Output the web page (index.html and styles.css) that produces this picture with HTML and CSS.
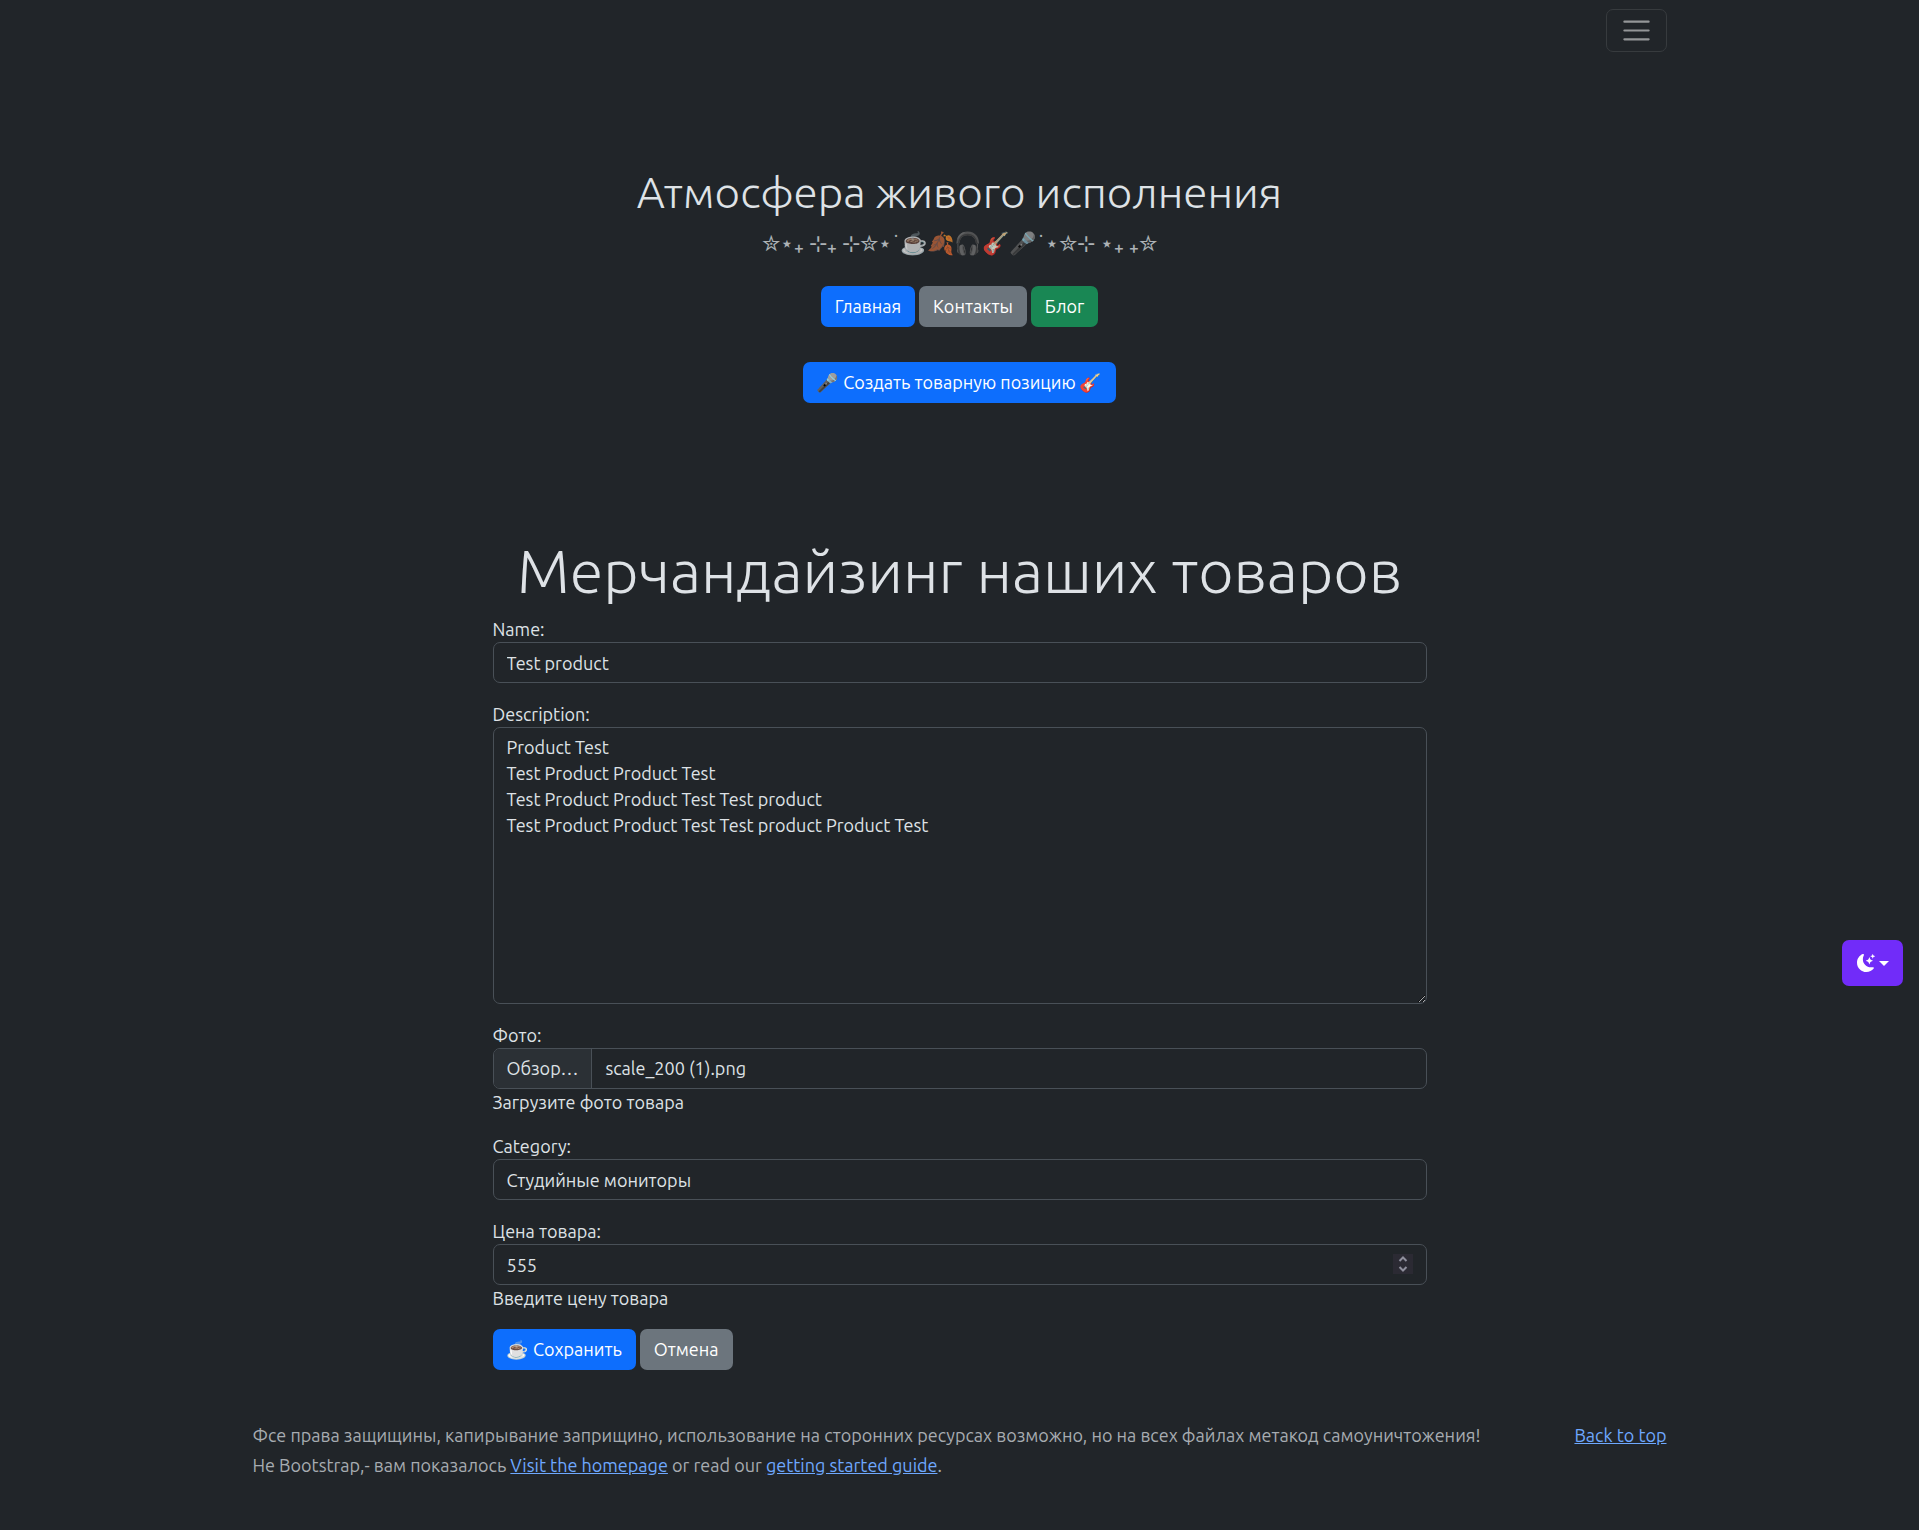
FILE: index.html
```html
<!DOCTYPE html>
<html lang="ru">
<head>
<meta charset="utf-8">
<meta name="viewport" content="width=device-width, initial-scale=1">
<title>Мерчандайзинг наших товаров</title>
<link rel="stylesheet" href="styles.css">
</head>
<body>
<header class="navbar">
  <div class="container navbar-row">
    <button class="toggler" type="button" aria-label="Меню">
      <svg class="toggler-icon" viewBox="0 0 30 30" aria-hidden="true"><path d="M4 7h22M4 15h22M4 23h22" fill="none" stroke="currentColor" stroke-width="2" stroke-linecap="round" stroke-miterlimit="10"/></svg>
    </button>
  </div>
</header>

<main>
  <section class="hero">
    <h1 class="hero-title">Атмосфера живого исполнения</h1>
    <p class="lead">✮⋆<span class="plus">₊</span> ⊹<span class="plus">₊</span> ⊹✮⋆˙☕🍂🎧🎸🎤˙⋆✮⊹ ⋆<span class="plus">₊</span> <span class="plus">₊</span>✮</p>
    <nav class="btn-row btn-row-center">
      <a class="btn btn-primary" href="#">Главная</a>
      <a class="btn btn-secondary" href="#">Контакты</a>
      <a class="btn btn-success" href="#">Блог</a>
    </nav>
    <div class="btn-row btn-row-center hero-create">
      <a class="btn btn-primary" href="#">🎤 Создать товарную позицию 🎸</a>
    </div>
  </section>

  <section class="product">
    <h2 class="product-title">Мерчандайзинг наших товаров</h2>
    <form class="form">
      <div class="field">
        <label for="name">Name:</label>
        <input class="control" id="name" type="text" value="Test product">
      </div>
      <div class="field">
        <label for="description">Description:</label>
        <textarea class="control" id="description" rows="10">Product Test
Test Product Product Test
Test Product Product Test Test product
Test Product Product Test Test product Product Test</textarea>
      </div>
      <div class="field">
        <label for="photo">Фото:</label>
        <div class="control file">
          <span class="file-button">Обзор…</span>
          <span class="file-name">scale_200 (1).png</span>
          <input class="file-input" id="photo" type="file">
        </div>
        <span class="help">Загрузите фото товара</span>
      </div>
      <div class="field">
        <label for="category">Category:</label>
        <select class="control" id="category"><option>Студийные мониторы</option></select>
      </div>
      <div class="field">
        <label for="price">Цена товара:</label>
        <div class="number">
          <input class="control" id="price" type="number" value="555">
          <svg class="spinner" viewBox="0 0 20 20" aria-hidden="true"><path d="M6.500 7 10 3.500 13.500 7M6.500 13 10 16.500 13.500 13" fill="none" stroke="currentColor" stroke-width="2"/></svg>
        </div>
        <span class="help">Введите цену товара</span>
      </div>
      <div class="btn-row">
        <button class="btn btn-primary" type="submit">☕ Сохранить</button>
        <a class="btn btn-secondary" href="#">Отмена</a>
      </div>
    </form>
  </section>
</main>

<footer class="footer">
  <div class="container footer-row">
    <div class="footer-text">
      <p>Фсе права защищины, капирывание заприщино, использование на сторонних ресурсах возможно, но на всех файлах метакод самоуничтожения!</p>
      <p>Не Bootstrap,- вам показалось <a href="#">Visit the homepage</a> or read our <a href="#">getting started guide</a>.</p>
    </div>
    <a href="#">Back to top</a>
  </div>
</footer>

<button class="theme" type="button" aria-label="Тема">
  <svg class="theme-icon" viewBox="0 0 16 16" aria-hidden="true" fill="currentColor"><path d="M6 .278a.768.768 0 0 1 .08.858 7.208 7.208 0 0 0-.878 3.460c0 4.021 3.278 7.277 7.318 7.277.527 0 1.040-.055 1.533-.160a.787.787 0 0 1 .810.316.733.733 0 0 1-.031.893A8.349 8.349 0 0 1 8.344 16C3.734 16 0 12.286 0 7.710 0 4.266 2.114 1.312 5.124.060A.752.752 0 0 1 6 .278z"/><path d="M10.794 3.148a.217.217 0 0 1 .412 0l.387 1.162c.173.518.579.924 1.097 1.097l1.162.387a.217.217 0 0 1 0 .412l-1.162.387a1.734 1.734 0 0 0-1.097 1.097l-.387 1.162a.217.217 0 0 1-.412 0l-.387-1.162A1.734 1.734 0 0 0 9.310 6.593l-1.162-.387a.217.217 0 0 1 0-.412l1.162-.387a1.734 1.734 0 0 0 1.097-1.097l.387-1.162zM13.863.099a.145.145 0 0 1 .274 0l.258.774c.115.346.386.617.732.732l.774.258a.145.145 0 0 1 0 .274l-.774.258a1.156 1.156 0 0 0-.732.732l-.258.774a.145.145 0 0 1-.274 0l-.258-.774a1.156 1.156 0 0 0-.732-.732l-.774-.258a.145.145 0 0 1 0-.274l.774-.258c.346-.115.617-.386.732-.732L13.863.100z"/></svg>
  <span class="caret"></span>
</button>
</body>
</html>
```
FILE: styles.css
```css
* { box-sizing: border-box; }

body {
  margin: 0;
  background: #212529;
  color: #dee2e6;
  font: 400 18px/26px Ubuntu, "Noto Sans", "Noto Color Emoji", sans-serif;
}

h1, h2, p { margin: 0; }

a { color: #6ea8fe; }

.container {
  width: 100%;
  max-width: 1440px;
  margin: 0 auto;
  padding: 0 13px;
}

.navbar { padding: 9px 0; }

.navbar-row {
  display: flex;
  justify-content: flex-end;
}

.toggler {
  display: flex;
  align-items: center;
  justify-content: center;
  width: 61px;
  height: 43px;
  padding: 0;
  border: 1px solid #373b3e;
  border-radius: 7px;
  background: none;
  color: #949698;
}

.toggler-icon {
  width: 33px;
  height: 33px;
}

.hero {
  padding: 105px 13px;
  text-align: center;
}

.hero-title {
  font-size: 44px;
  font-weight: 300;
  line-height: 52px;
  margin-bottom: 8px;
}

.lead {
  font-size: 22px;
  font-weight: 300;
  line-height: 33px;
  margin-bottom: 27px;
  opacity: .75;
}

.plus {
  font-family: "DejaVu Sans", sans-serif;
  font-size: 29px;
  font-weight: 200;
  line-height: 1px;
}

.btn-row {
  display: flex;
  gap: 4px;
}

.btn-row-center { justify-content: center; }

.hero-create { margin-top: 35px; }

.btn {
  padding: 6px 13px 7px;
  border: 1px solid transparent;
  border-radius: 7px;
  color: #fff;
  font: inherit;
  text-decoration: none;
}

.btn-primary { background: #0d6efd; }
.btn-secondary { background: #6c757d; }
.btn-success { background: #198754; }

.product {
  max-width: 960px;
  margin: 0 auto;
  padding: 26px 13px 0;
}

.product-title {
  font-size: 61px;
  font-weight: 300;
  line-height: 73px;
  margin-bottom: 9px;
  text-align: center;
}

.form {
  display: grid;
  gap: 18px;
}

.field {
  display: grid;
}

.control {
  display: block;
  width: 100%;
  height: 41px;
  margin: 0;
  padding: 6px 13px;
  border: 1px solid #495057;
  border-radius: 7px;
  background: #212529;
  color: inherit;
  font: inherit;
  appearance: none;
}

textarea.control {
  height: 277px;
  resize: vertical;
}

.file {
  position: relative;
  display: flex;
  padding: 0;
  overflow: hidden;
}

.file-button {
  padding: 6px 13px;
  border-right: 1px solid #495057;
  background: #2b3035;
}

.file-name { padding: 6px 13px; }

.file-input {
  position: absolute;
  inset: 0;
  width: 100%;
  opacity: 0;
}

.number { position: relative; }

.number .control { appearance: textfield; }

.number .control::-webkit-inner-spin-button { appearance: none; }

.spinner {
  position: absolute;
  top: 10px;
  right: 14px;
  width: 20px;
  height: 20px;
  background: #2b2a33;
  color: #8f8f9d;
}

.footer {
  padding: 52px 0;
  color: #a7acb1;
}

.footer-row {
  display: flex;
  justify-content: space-between;
}

.footer-text {
  display: grid;
  gap: 4px;
}

.theme {
  position: fixed;
  right: 16px;
  bottom: 544px;
  display: flex;
  align-items: center;
  justify-content: center;
  gap: 4px;
  width: 61px;
  height: 46px;
  padding: 0;
  border: 0;
  border-radius: 7px;
  background: #712cf9;
  color: #fff;
}

.theme-icon {
  width: 18px;
  height: 18px;
}

.caret {
  border: 5px solid transparent;
  border-top-color: currentColor;
  border-bottom: 0;
}
```
